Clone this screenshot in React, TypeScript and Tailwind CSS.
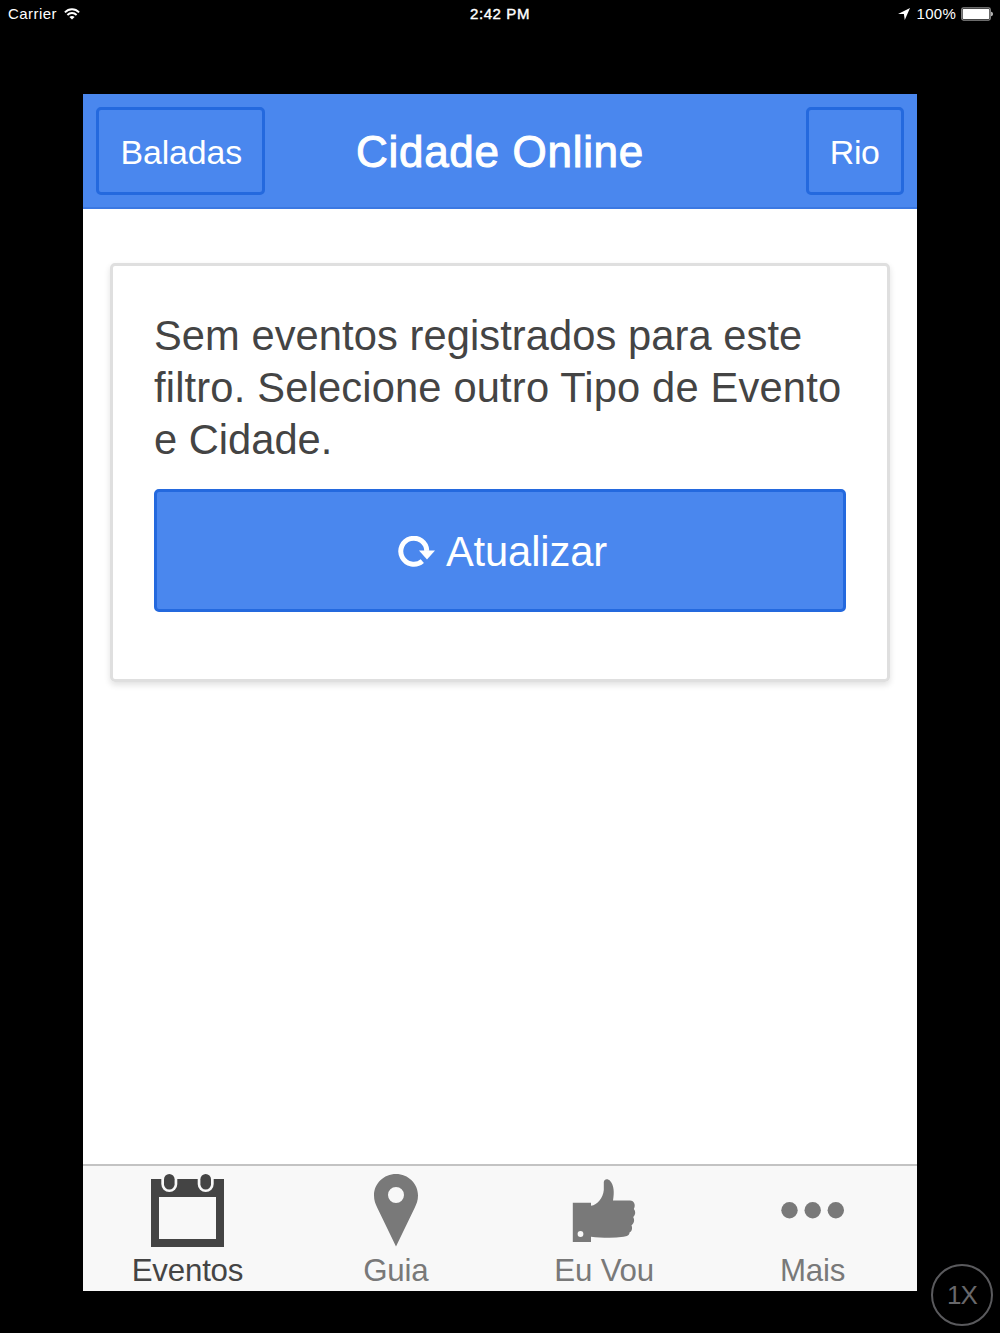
import type { ReactNode } from "react";

function WifiIcon() {
    return (
        <svg width="16" height="12" viewBox="0 0 16 12" fill="none" stroke="white" strokeWidth="1.9">
            <path d="M0.9 4.3C4.9 0.2 11.1 0.2 15.1 4.3" />
            <path d="M3.4 7C6 4.4 10 4.4 12.6 7" />
            <path d="M8 11.6L5.4 9C6.8 7.6 9.2 7.6 10.6 9Z" fill="white" stroke="none" />
        </svg>
    )
}

function StatusBar() {
    return (
        <div className="flex h-[94px] items-start justify-between text-[15px] leading-[28px] text-white">
            <div className="flex h-7 w-1/3 items-center pl-2">
                <span className="w-[49px] whitespace-nowrap tracking-[0.45px]">Carrier</span>
                <span className="ml-[7px]"><WifiIcon /></span>
            </div>
            <div className="h-7 w-1/3 text-center whitespace-nowrap tracking-[0.6px] [-webkit-text-stroke:0.4px_white]">2:42 PM</div>
            <div className="flex h-7 w-1/3 items-center justify-end pr-[7px]">
                <svg width="12" height="12" viewBox="0 0 11 11" className="mr-[7px]">
                    <path d="M11 0L6.2 11L5.4 5.6L0 5.4Z" fill="white" />
                </svg>
                <span className="mr-[5px] whitespace-nowrap tracking-[0.25px]">100%</span>
                <svg width="32" height="14" viewBox="0 0 32 14">
                    <rect x="0.7" y="0.9" width="28.6" height="12.2" rx="1.8" fill="none" stroke="#8f8f8f" strokeWidth="1.2" />
                    <rect x="1.7" y="1.9" width="26.6" height="10.2" rx="0.8" fill="white" />
                    <path d="M30.3 4.7C32.2 5.2 32.2 8.8 30.3 9.3Z" fill="white" />
                </svg>
            </div>
        </div>
    )
}

function Header() {
    return (
        <header className="grid h-[115px] grid-cols-[169px_1fr_169px] items-start border-b-2 border-[#3b78e2] bg-[#4a87ee] px-[13px] pt-[13px] text-white">
            <button className="h-[88px] w-[169px] rounded-[5px] border-3 border-[#2469de] pt-[2px] pl-[1px] text-[33.85px] tracking-[-0.1px]">
                Baladas
            </button>
            <h1 className="justify-self-center pt-[15px] text-[44px] leading-[60px] tracking-[0.7px] whitespace-nowrap [-webkit-text-stroke:1px_white]">Cidade Online</h1>
            <button className="h-[88px] w-[98px] justify-self-end rounded-[5px] border-3 border-[#2469de] pt-[2px] text-[33.85px] tracking-[-0.3px]">
                Rio
            </button>
        </header>
    )
}

function EventCard() {
    return (
        <section className="mx-auto mt-[54px] h-[419px] w-[780px] rounded-[5px] border-3 border-[#dfdfdf] px-[41px] pt-[44px] shadow-[0_3px_6px_rgba(0,0,0,0.12)]">
            <p className="text-[41.67px] leading-[52px] whitespace-nowrap text-[#444]">
                <span className="tracking-[0.07px]">Sem eventos registrados para este</span><br />
                <span className="tracking-[0.17px]">filtro. Selecione outro Tipo de Evento</span><br />
                e Cidade.
            </p>
            <button className="mt-[23px] flex h-[123px] w-full items-center justify-center rounded-[5px] border-3 border-[#2469de] bg-[#4a87ee] pt-[3px] pl-[5px] text-[41.67px] tracking-[-0.1px] text-white">
                <svg width="37" height="32" viewBox="0 0 37 32" className="mr-[11px]">
                    <path d="M24.3 25.1A13 13 0 1 1 28.8 14.8" fill="none" stroke="white" strokeWidth="5" />
                    <path d="M21 14.5H37L29 23.5Z" fill="white" />
                </svg>
                <span>Atualizar</span>
            </button>
        </section>
    )
}

function CalendarIcon() {
    return (
        <svg width="74" height="74" viewBox="-1 0 74 74">
            <path d="M0 6H73V74H0Z" fill="#444" />
            <path d="M8 24H65V66H8Z" fill="#f8f8f8" />
            <rect x="10.3" y="-2" width="16" height="21" rx="8" fill="#f8f8f8" />
            <rect x="46.7" y="-2" width="16" height="21" rx="8" fill="#f8f8f8" />
            <rect x="13" y="1" width="10.6" height="15.5" rx="5.3" fill="#444" />
            <rect x="49.4" y="1" width="10.6" height="15.5" rx="5.3" fill="#444" />
        </svg>
    )
}

function PinIcon() {
    return (
        <svg width="44" height="74" viewBox="0 0 44 74">
            <path d="M22 1C9.8 1 0 10.6 0 22.5C0 27.5 1.5 31 3.4 35L22 73.5L40.6 35C42.5 31 44 27.5 44 22.5C44 10.6 34.2 1 22 1ZM22 14A8 8 0 1 1 22 30A8 8 0 0 1 22 14Z" fill="#797979" />
        </svg>
    )
}

function ThumbIcon() {
    return (
        <svg width="64" height="74" viewBox="0 0 64 74">
            <path d="M0.8 29.8H19V32.7C25.5 32 31 25 31.8 17V9C32 6 35.5 5 38 7.7C42 12.3 42.5 19 41 27.6H58C62.3 27.6 64 32.5 61.8 36C64 38.5 63.5 42.2 61.2 44C62.9 47 62.2 50.3 59.5 52.2C60.8 55.6 59.7 58.4 57.5 59.5C57.5 62.5 55 63.2 51.5 63.7C40.5 65.5 28.5 64.6 19 63.7V69H0.8Z" fill="#797979" />
            <circle cx="8.5" cy="61" r="2.9" fill="#f8f8f8" />
        </svg>
    )
}

function DotsIcon() {
    return (
        <svg width="64" height="74" viewBox="0 0 64 74" fill="#797979">
            <circle cx="8.5" cy="37.3" r="8.2" />
            <circle cx="31.7" cy="37.3" r="8.2" />
            <circle cx="54.8" cy="37.3" r="8.2" />
        </svg>
    )
}

function Tab({ label, active, children }: { label: string; active?: boolean; children: ReactNode }) {
    return (
        <a className={`flex flex-1 flex-col items-center pt-[7px] ${active ? "text-[#444]" : "text-[#797979]"}`}>
            {children}
            <span className="mt-[6px] text-[31.25px] leading-[36px] tracking-[-0.2px] whitespace-nowrap">{label}</span>
        </a>
    )
}

function App() {
    return (
        <div className="relative h-[1333px] w-[1000px] overflow-hidden bg-black font-['Liberation_Sans',sans-serif]">
            <StatusBar />

            <main className="mx-auto flex h-[1197px] w-[833.4px] flex-col bg-white">
                <Header />
                <EventCard />
                <nav className="mt-auto flex h-[127px] border-t-2 border-[#c3c3c3] bg-[#f8f8f8]">
                    <Tab label="Eventos" active><CalendarIcon /></Tab>
                    <Tab label="Guia"><PinIcon /></Tab>
                    <Tab label="Eu Vou"><ThumbIcon /></Tab>
                    <Tab label="Mais"><DotsIcon /></Tab>
                </nav>
            </main>

            <button className="absolute top-[1264px] left-[931px] h-[62px] w-[62px] rounded-full border-2 border-[#5a5a5d] text-[26px] tracking-[-1px] text-[#68686b]">
                1X
            </button>
        </div>
    )
}

export default App;
